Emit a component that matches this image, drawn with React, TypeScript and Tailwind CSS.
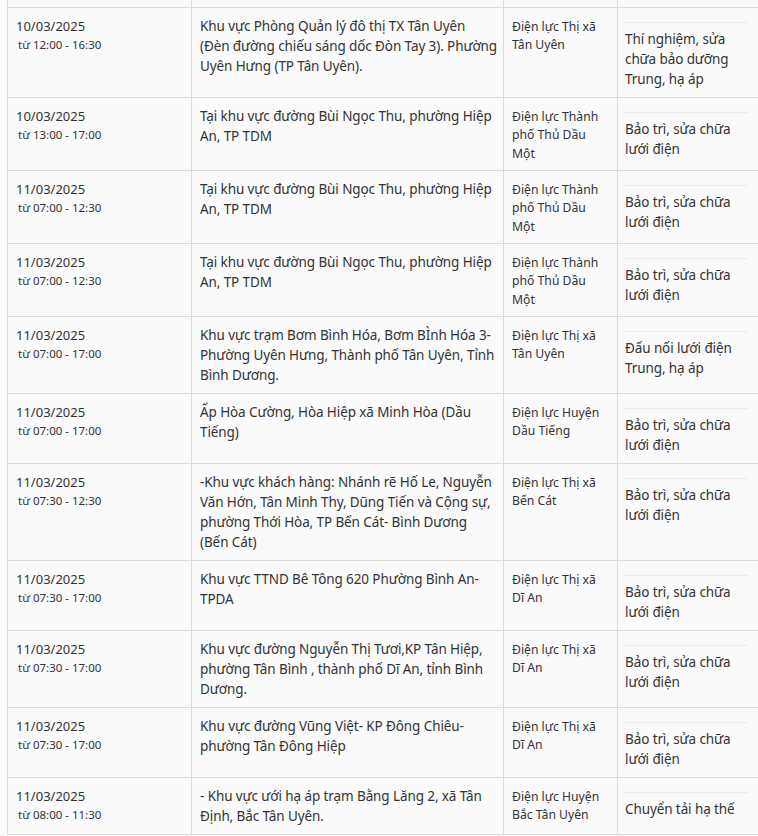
const rows = [
  {
    date: "10/03/2025",
    time: "từ 12:00 - 16:30",
    place: [
      "Khu vực Phòng Quản lý đô thị TX Tân Uyên",
      "(Đèn đường chiếu sáng dốc Đòn Tay 3). Phường",
      "Uyên Hưng (TP Tân Uyên).",
    ],
    unit: ["Điện lực Thị xã", "Tân Uyên"],
    reason: ["Thí nghiệm, sửa", "chữa bảo dưỡng", "Trung, hạ áp"],
  },
  {
    date: "10/03/2025",
    time: "từ 13:00 - 17:00",
    place: ["Tại khu vực đường Bùi Ngọc Thu, phường Hiệp", "An, TP TDM"],
    unit: ["Điện lực Thành", "phố Thủ Dầu", "Một"],
    reason: ["Bảo trì, sửa chữa", "lưới điện"],
  },
  {
    date: "11/03/2025",
    time: "từ 07:00 - 12:30",
    place: ["Tại khu vực đường Bùi Ngọc Thu, phường Hiệp", "An, TP TDM"],
    unit: ["Điện lực Thành", "phố Thủ Dầu", "Một"],
    reason: ["Bảo trì, sửa chữa", "lưới điện"],
  },
  {
    date: "11/03/2025",
    time: "từ 07:00 - 12:30",
    place: ["Tại khu vực đường Bùi Ngọc Thu, phường Hiệp", "An, TP TDM"],
    unit: ["Điện lực Thành", "phố Thủ Dầu", "Một"],
    reason: ["Bảo trì, sửa chữa", "lưới điện"],
  },
  {
    date: "11/03/2025",
    time: "từ 07:00 - 17:00",
    place: [
      "Khu vực trạm Bơm Bình Hóa, Bơm BÌnh Hóa 3-",
      "Phường Uyên Hưng, Thành phố Tân Uyên, Tỉnh",
      "Bình Dương.",
    ],
    unit: ["Điện lực Thị xã", "Tân Uyên"],
    reason: ["Đấu nối lưới điện", "Trung, hạ áp"],
  },
  {
    date: "11/03/2025",
    time: "từ 07:00 - 17:00",
    place: ["Ấp Hòa Cường, Hòa Hiệp xã Minh Hòa (Dầu", "Tiếng)"],
    unit: ["Điện lực Huyện", "Dầu Tiếng"],
    reason: ["Bảo trì, sửa chữa", "lưới điện"],
  },
  {
    date: "11/03/2025",
    time: "từ 07:30 - 12:30",
    place: [
      "-Khu vực khách hàng: Nhánh rẽ Hố Le, Nguyễn",
      "Văn Hớn, Tân Minh Thy, Dũng Tiến và Cộng sự,",
      "phường Thới Hòa, TP Bến Cát- Bình Dương",
      "(Bến Cát)",
    ],
    unit: ["Điện lực Thị xã", "Bến Cát"],
    reason: ["Bảo trì, sửa chữa", "lưới điện"],
  },
  {
    date: "11/03/2025",
    time: "từ 07:30 - 17:00",
    place: ["Khu vực TTND Bê Tông 620 Phường Bình An-", "TPDA"],
    unit: ["Điện lực Thị xã", "Dĩ An"],
    reason: ["Bảo trì, sửa chữa", "lưới điện"],
  },
  {
    date: "11/03/2025",
    time: "từ 07:30 - 17:00",
    place: [
      "Khu vực đường Nguyễn Thị Tươi,KP Tân Hiệp,",
      "phường Tân Bình , thành phố Dĩ An, tỉnh Bình",
      "Dương.",
    ],
    unit: ["Điện lực Thị xã", "Dĩ An"],
    reason: ["Bảo trì, sửa chữa", "lưới điện"],
  },
  {
    date: "11/03/2025",
    time: "từ 07:30 - 17:00",
    place: ["Khu vực đường Vũng Việt- KP Đông Chiêu-", "phường Tân Đông Hiệp"],
    unit: ["Điện lực Thị xã", "Dĩ An"],
    reason: ["Bảo trì, sửa chữa", "lưới điện"],
  },
  {
    date: "11/03/2025",
    time: "từ 08:00 - 11:30",
    place: ["- Khu vực ưới hạ áp trạm Bằng Lăng 2, xã Tân", "Định, Bắc Tân Uyên."],
    unit: ["Điện lực Huyện", "Bắc Tân Uyên"],
    reason: ["Chuyển tải hạ thế"],
  },
];

const Lines = ({ lines }: { lines: string[] }) => (
  <>
    {lines.map((l, i) => (
      <div key={i} className="whitespace-nowrap">
        {l}
      </div>
    ))}
  </>
);

const cell = "border border-[#dcdcdc] px-2 py-2 align-top";

export default function App() {
  return (
    <div
      className="w-[758px] h-[836px] overflow-hidden bg-[#fafafa] pl-[7px] text-[#333]"
      style={{ fontFamily: '"Noto Sans", "Open Sans", sans-serif' }}
    >
      <table className="table-fixed border-collapse w-[760px]">
        <colgroup>
          <col className="w-[184px]" />
          <col className="w-[312px]" />
          <col className="w-[114px]" />
          <col className="w-[150px]" />
        </colgroup>
        <tbody>
          <tr>
            <td className="border border-[#dcdcdc] border-t-0 h-[7px] p-0"></td>
            <td className="border border-[#dcdcdc] border-t-0 h-[7px] p-0"></td>
            <td className="border border-[#dcdcdc] border-t-0 h-[7px] p-0"></td>
            <td className="border border-[#dcdcdc] border-t-0 h-[7px] p-0"></td>
          </tr>
          {rows.map((r, i) => (
            <tr key={i}>
              <td className={cell}>
                <div className="text-[13px] leading-[20px]">{r.date}</div>
                <div className="text-[11.5px] leading-[18.67px] pl-[2px]">{r.time}</div>
              </td>
              <td className={`${cell} text-[13.5px] leading-[20px] tracking-[-0.1px]`}>
                <Lines lines={r.place} />
              </td>
              <td className="border border-[#dcdcdc] px-2 pt-[10px] pb-[6px] align-top text-[12.2px] leading-[18.67px]">
                <Lines lines={r.unit} />
              </td>
              <td className={`${cell} text-[13.5px] leading-[20px] tracking-[-0.1px]`}>
                <div className="mt-[6px] -ml-[1px] w-[123px] border-t border-[#ebebeb] pt-[6px]">
                  <Lines lines={r.reason} />
                </div>
              </td>
            </tr>
          ))}
        </tbody>
      </table>
    </div>
  );
}
